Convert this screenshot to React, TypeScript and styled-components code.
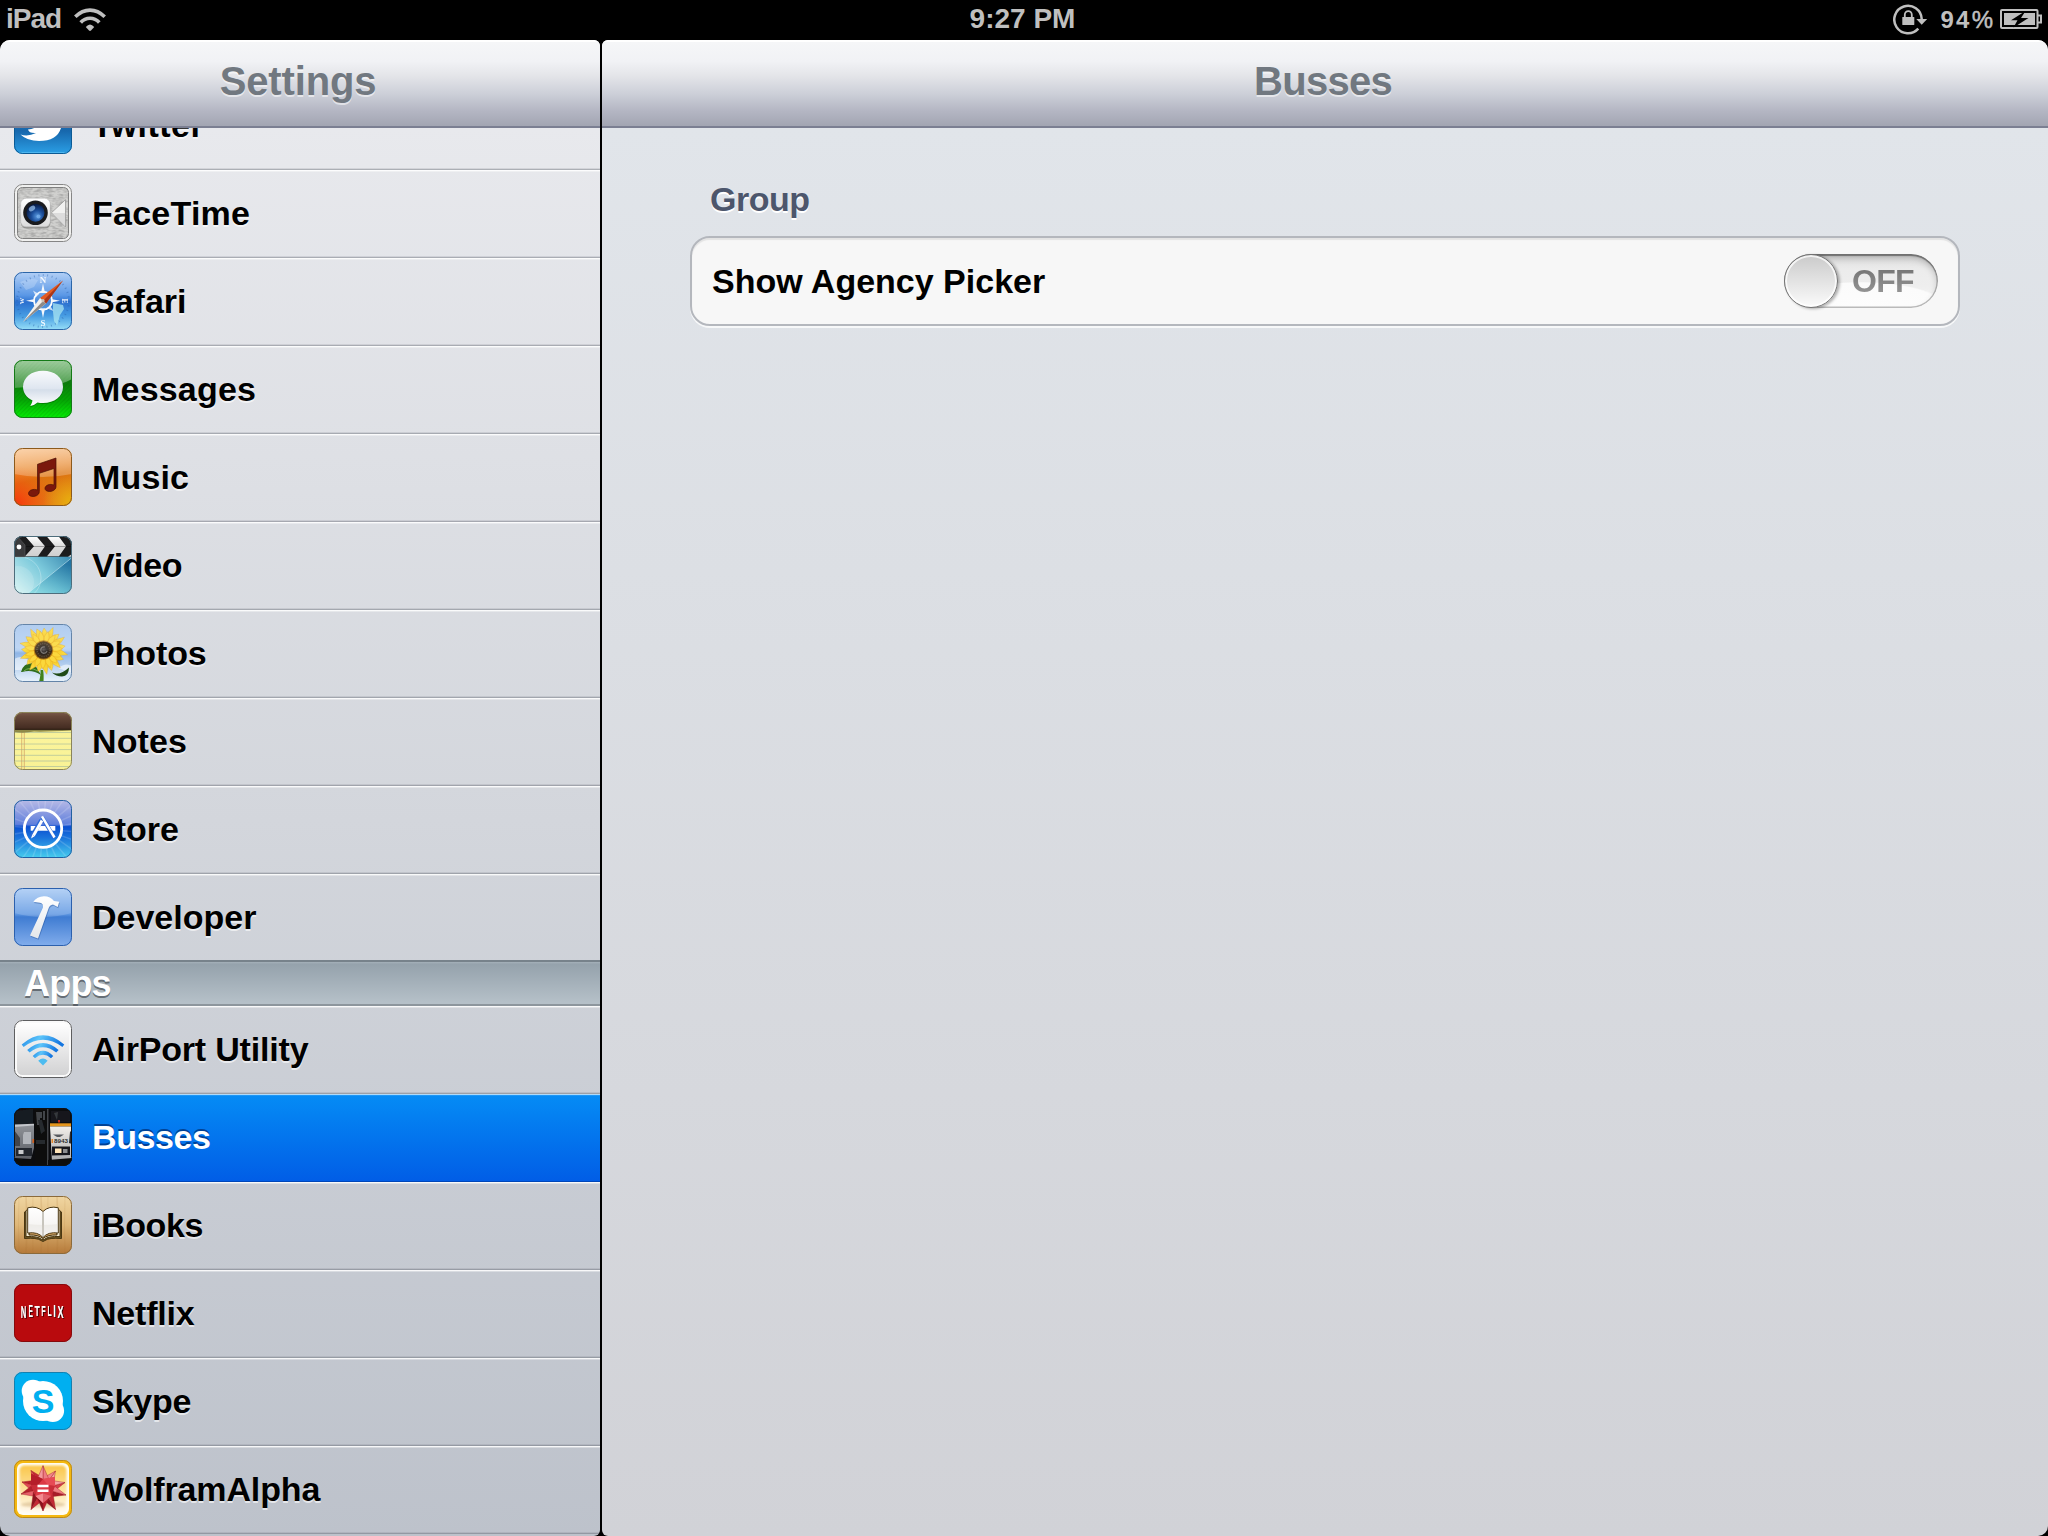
import React from "react";
import styled, { createGlobalStyle, css } from "styled-components";

const GlobalStyle = createGlobalStyle`
  * { box-sizing: border-box; }
  html, body { margin: 0; padding: 0; background: #000; }
  body { overflow: hidden; font-family: "Liberation Sans", Arial, sans-serif; font-weight: 700; }
`;

const Screen = styled.div`
  width: 2048px;
  height: 1536px;
  background: #000;
  display: flex;
  flex-direction: column;
`;

const StatusBar = styled.header`
  height: 40px;
  display: grid;
  grid-template-columns: 1fr auto 1fr;
  color: #bfbfbf;
  font-size: 28px;
  line-height: 38px;
  padding: 0 6px 0 6px;
`;

const StatusGroup = styled.div<{ $end?: boolean }>`
  display: flex;
  align-items: flex-start;
  justify-content: ${(p) => (p.$end ? "flex-end" : "flex-start")};
  svg { display: block; flex: none; }
`;

const Carrier = styled.span`
  letter-spacing: -1px;
  margin-right: 12px;
`;

const Clock = styled.span`
  padding-right: 3px;
`;

const Percent = styled.span`
  font-size: 24px;
  letter-spacing: 2.2px;
  margin: 0 7px 0 12px;
  line-height: 39px;
  i { font-style: normal; font-weight: 400; letter-spacing: 0; -webkit-text-stroke: 0.5px #bfbfbf; }
`;

const Split = styled.div`
  flex: 1;
  min-height: 0;
  display: grid;
  grid-template-columns: 600px 1446px;
  column-gap: 2px;
`;

const Pane = styled.section<{ $tone: "list" | "detail" }>`
  display: flex;
  flex-direction: column;
  min-height: 0;
  overflow: hidden;
  border-radius: ${(p) => (p.$tone === "list" ? "10px 6px 6px 10px" : "6px 10px 10px 6px")};
  background: ${(p) =>
    p.$tone === "list"
      ? "linear-gradient(#ececf0 0, #e8e9ed 88px, #d3d6dc 780px, #bdc2cb 100%)"
      : "linear-gradient(#e2e6eb 0, #e1e5ea 88px, #d1d2d7 100%)"};
`;

const TitleBar = styled.div`
  height: 88px;
  flex: none;
  border-top: 2px solid #fff;
  border-bottom: 2px solid #7b7f92;
  background: linear-gradient(#f5f6f8 0, #f1f2f5 23%, #e4e5e9 40%, #cccfd8 62%, #b4b6c3 82%, #a2a5b2 100%);
  display: flex;
  align-items: center;
  justify-content: center;
`;

const Title = styled.h1<{ $tracking?: number }>`
  margin: 0;
  padding: 0 4px 6px 0;
  font-size: 40px;
  line-height: 46px;
  color: #717880;
  letter-spacing: ${(p) => p.$tracking ?? -0.15}px;
  text-shadow: 0 2px 0 rgba(255, 255, 255, 0.55);
`;

const Viewport = styled.div`
  flex: 1;
  min-height: 0;
  overflow: hidden;
`;

const List = styled.ul`
  list-style: none;
  margin: -46px 0 0;
  padding: 0;
`;

const Row = styled.li<{ $selected?: boolean; $last?: boolean }>`
  height: ${(p) => (p.$last ? 86 : 88)}px;
  display: flex;
  align-items: flex-start;
  padding: 14px 0 0 14px;
  color: #000;
  text-shadow: 0 2px 0 rgba(255, 255, 255, 0.6);
  box-shadow: inset 0 1px 0 rgba(255, 255, 255, 0.8), inset 0 2px 0 rgba(255, 255, 255, 0.35),
    inset 0 -1px 0 ${(p) => (p.$last ? "transparent" : "rgba(90,95,105,0.32)")},
    inset 0 -2px 0 ${(p) => (p.$last ? "transparent" : "rgba(90,95,105,0.14)")};
  ${(p) =>
    p.$selected &&
    css`
      color: #fff;
      text-shadow: 0 -2px 0 rgba(0, 30, 90, 0.6);
      background: linear-gradient(#058cf5, #015de6);
      box-shadow: inset 0 1px 0 rgba(190, 225, 250, 0.9), inset 0 2px 0 rgba(90, 180, 250, 0.3),
        inset 0 -1px 0 #0046b8;
    `}
`;

const Label = styled.span<{ $tracking: number }>`
  font-size: 34px;
  line-height: 40px;
  margin: 9px 0 0 20px;
  white-space: nowrap;
  letter-spacing: ${(p) => p.$tracking}px;
`;

const SectionHeader = styled.li`
  height: 46px;
  border-top: 2px solid #77828b;
  border-bottom: 2px solid #8d969d;
  background: linear-gradient(#a5b1ba 0, #95a2ac 5%, #b5c0c8 96%);
  color: #fff;
  font-size: 36px;
  line-height: 44px;
  padding-left: 24px;
  letter-spacing: -0.8px;
  text-shadow: 0 2px 0 rgba(60, 66, 72, 0.65);
`;

const IconSvg = styled.svg`
  width: 58px;
  height: 58px;
  flex: none;
  display: block;
  text-shadow: none;
`;

const Settings = styled.main`
  display: flex;
  flex-direction: column;
  padding: 50px 88px 0 88px;
`;

const GroupTitle = styled.h2`
  margin: 0 0 16px 20px;
  font-size: 34px;
  line-height: 42px;
  color: #4c566c;
  text-shadow: 0 2px 0 #fff;
  letter-spacing: -0.5px;
`;

const Cell = styled.div`
  height: 90px;
  border: 2px solid #b4b7bd;
  border-radius: 20px;
  background: #f7f7f7;
  box-shadow: 0 2px 0 rgba(255, 255, 255, 0.75), inset 0 2px 1px rgba(0, 0, 0, 0.08);
  display: flex;
  align-items: center;
  justify-content: space-between;
  padding: 0 20px;
  font-size: 34px;
  line-height: 40px;
  color: #000;
`;

const Toggle = styled.button`
  width: 154px;
  height: 54px;
  border: 0;
  padding: 0;
  border-radius: 27px;
  background: radial-gradient(ellipse 92px 28px at 50% 100%, #fdfdfd 0, #fbfbfb 90%, rgba(252, 252, 252, 0) 94%),
    linear-gradient(#dcdcdc, #ececec 30%, #eee 60%, #f9f9f9);
  box-shadow: inset 0 0 0 1.5px rgba(110, 110, 110, 0.45), inset 0 2px 1px rgba(50, 50, 50, 0.5),
    inset 0 4px 7px rgba(0, 0, 0, 0.22);
  display: flex;
  align-items: center;
`;

const Knob = styled.span`
  width: 54px;
  height: 54px;
  border-radius: 50%;
  border: 1.5px solid #747474;
  background: linear-gradient(#cacaca, #fbfbfb);
  box-shadow: inset 0 0 0 2px rgba(255, 255, 255, 0.75), 2px 1px 3px rgba(0, 0, 0, 0.3);
`;

const ToggleText = styled.span`
  font-family: "Liberation Sans", Arial, sans-serif;
  font-weight: 700;
  font-size: 32px;
  line-height: 36px;
  margin: 0 0 1px 14px;
  letter-spacing: -0.7px;
  color: transparent;
  background: linear-gradient(#6e6e6e, #9c9c9c);
  background-clip: text;
  -webkit-background-clip: text;
`;

const Stops = ({ id, colors, x2 = 0, y2 = 1 }: { id: string; colors: [number, string][]; x2?: number; y2?: number }) => (
  <linearGradient id={id} x1="0" y1="0" x2={x2} y2={y2}>
    {colors.map(([o, c], i) => (
      <stop key={i} offset={o} stopColor={c} />
    ))}
  </linearGradient>
);

const IconFrame = ({ id, edge, children }: { id: string; edge: string; children: React.ReactNode }) => (
  <IconSvg viewBox="0 0 58 58">
    <defs>
      <clipPath id={`${id}-clip`}>
        <rect width="58" height="58" rx="8.5" />
      </clipPath>
    </defs>
    <g clipPath={`url(#${id}-clip)`}>{children}</g>
    <rect x="0.5" y="0.5" width="57" height="57" rx="8" fill="none" stroke={edge} />
  </IconSvg>
);

const TwitterIcon = () => (
  <IconFrame id="tw" edge="#0b5a94">
    <defs><Stops id="tw-g" colors={[[0, "#3d8fd0"], [0.6, "#1767ac"], [1, "#2ba0e6"]]} /></defs>
    <rect width="58" height="58" fill="url(#tw-g)" />
    <path d="M6.500 38.500Q14 41 22 37Q15 37.500 14 33.500Q19 33 22 31L20 20H48Q50 45 25 45Q13 45 6.500 38.500Z" fill="#fff" />
    <path d="M2 56.500H56" stroke="#5cc0f5" strokeWidth="1" opacity=".7" />
  </IconFrame>
);

const FaceTimeIcon = () => (
  <IconFrame id="ft" edge="#858585">
    <defs>
      <filter id="ft-n" x="0" y="0" width="100%" height="100%" colorInterpolationFilters="sRGB">
        <feTurbulence type="fractalNoise" baseFrequency=".18 .45" numOctaves="2" seed="3" />
        <feColorMatrix values="0 0 0 0 .5  0 0 0 0 .5  0 0 0 0 .5  1.6 0 0 0 -.6" />
      </filter>
      <Stops id="ft-b" colors={[[0, "#ffffff"], [1, "#dcdcdc"]]} />
      <radialGradient id="ft-l" cx=".6" cy=".7" r=".7">
        <stop offset="0" stopColor="#5a9ae0" /><stop offset=".45" stopColor="#1c4f9c" /><stop offset="1" stopColor="#06163c" />
      </radialGradient>
    </defs>
    <rect width="58" height="58" fill="#f0f0ef" />
    <rect x="3.500" y="3.500" width="51" height="51" rx="5" fill="#d0d0ce" stroke="#7f7f7f" />
    <rect x="4" y="4" width="50" height="50" filter="url(#ft-n)" opacity=".7" />
    <rect x="7" y="15" width="29.500" height="29.500" rx="5.500" fill="#7d7d7b" opacity=".7" />
    <rect x="6.700" y="14.300" width="29.500" height="28.500" rx="5.500" fill="url(#ft-b)" stroke="#bbb" strokeWidth=".5" />
    <path d="M37.500 28.700L51.500 15.700V43Z" fill="#f1f1f0" stroke="#8f8f8f" strokeWidth=".7" />
    <path d="M38 29H51V42.500Z" fill="#cfcfce" opacity=".6" />
    <circle cx="21.500" cy="28.700" r="12.300" fill="#1a1b1e" />
    <circle cx="21.500" cy="28.700" r="9" fill="url(#ft-l)" />
    <ellipse cx="18" cy="24.500" rx="3.500" ry="2.300" fill="#9cc6f2" opacity=".7" transform="rotate(-35 18 24.500)" />
    <circle cx="24.500" cy="32.500" r="2" fill="#86bdf5" opacity=".6" />
  </IconFrame>
);

const SafariIcon = () => (
  <IconFrame id="sf" edge="#2c66a8">
    <defs>
      <Stops id="sf-g" colors={[[0, "#b3d0f6"], [0.4, "#5b98e6"], [0.52, "#2b70cf"], [0.75, "#459be2"], [1, "#98e0f8"]]} />
    </defs>
    <rect width="58" height="58" fill="url(#sf-g)" />
    <path d="M39 31L49 33L50 37L46 43L43 54L40 49L39 40Z" fill="#a8e6f2" opacity=".75" />
    <path d="M6 10Q16 5 24 8L20 15L12 18Z" fill="#cfe2fa" opacity=".35" />
    <circle cx="29" cy="29" r="26" fill="none" stroke="#2459a6" strokeWidth="2" strokeDasharray="1 3.500" opacity=".4" />
    <circle cx="29" cy="28.700" r="9" fill="#7db4ea" fillOpacity=".35" stroke="#fff" strokeWidth="1.800" />
    <g fill="#f5f8fc">
      <path d="M29 11.500L31 21H27Z M29 46L31 36.500H27Z M12 28.700L21 27V30.500Z M46 28.700L37 27V30.500Z" />
      <path d="M19 18.500L25 22L22 25Z M39.500 39L36 33.500L33.500 36.500Z M19 39L22 33L25 36Z M39.500 18.500L33.500 21.500L36 24.500Z" opacity=".75" />
    </g>
    <g fill="#fff" fontFamily="Liberation Serif, serif" fontSize="9" fontWeight="700" textAnchor="middle" opacity=".9">
      <text x="29" y="10.500">N</text>
      <text x="29" y="54">S</text>
      <text transform="translate(10 29) rotate(-90)" fontSize="6.500">W</text>
      <text transform="translate(48 29) rotate(90)" fontSize="7.500">E</text>
    </g>
    <path d="M49 8.500L26 26L32 31.500Z" fill="#e35a22" />
    <path d="M49 8.500L29 29L32 31.500Z" fill="#a8371a" />
    <path d="M9 50L26 26L32 31.500Z" fill="#f4f1ec" />
    <path d="M9 50L29 29L32 31.500Z" fill="#8f8a87" />
    <circle cx="29" cy="28.700" r="1.600" fill="#c9c2ba" />
  </IconFrame>
);

const MessagesIcon = () => (
  <IconFrame id="ms" edge="#147a17">
    <defs>
      <Stops id="ms-g" colors={[[0, "#3f9b3d"], [0.4, "#0c7c0c"], [0.7, "#05a905"], [1, "#05f005"]]} />
      <Stops id="ms-b" colors={[[0, "#f8fafc"], [0.5, "#dfe6f0"], [0.54, "#d5deea"], [1, "#ffffff"]]} />
      <Stops id="ms-h" colors={[[0, "rgba(255,255,255,.5)"], [1, "rgba(255,255,255,.25)"]]} />
      <pattern id="ms-p" width="3" height="3" patternUnits="userSpaceOnUse" patternTransform="rotate(45)">
        <rect width="1.300" height="3" fill="#025f02" opacity=".16" />
      </pattern>
    </defs>
    <rect width="58" height="58" fill="url(#ms-g)" />
    <rect width="58" height="58" fill="url(#ms-p)" />
    <path d="M0 0H58V19Q46 26 29 26.500Q12 27 0 28Z" fill="url(#ms-h)" />
    <path d="M29 12C40.500 12 49 18.500 49 28C49 37.500 40.500 44 29 44Q26 44 23.500 43.300Q21 46 16.300 47Q18 44.500 18.500 41.500C12.500 38.500 9 33.700 9 28C9 18.500 17.500 12 29 12Z" fill="#045804" opacity=".5" />
    <path d="M29 10.800C40.500 10.800 49 17.500 49 27C49 36.500 40.500 43 29 43Q26 43 23.500 42.500Q21 45 16.300 46Q18 43.500 18.500 40.500C12.500 37.500 9 32.700 9 27C9 17.500 17.500 10.800 29 10.800Z" fill="url(#ms-b)" />
  </IconFrame>
);

const MusicIcon = () => (
  <IconFrame id="mu" edge="#8c5a1c">
    <defs>
      <Stops id="mu-g" x2={0.25} colors={[[0, "#f7a85a"], [0.45, "#e88425"], [0.6, "#dc7410"], [1, "#e37a16"]]} />
      <radialGradient id="mu-r" cx="0" cy="1" r=".7"><stop offset="0" stopColor="#f8300c" /><stop offset="1" stopColor="#f6500c" stopOpacity="0" /></radialGradient>
      <radialGradient id="mu-y" cx="1" cy=".95" r=".5"><stop offset="0" stopColor="#e8b30e" /><stop offset="1" stopColor="#e8b30e" stopOpacity="0" /></radialGradient>
      <Stops id="mu-h" colors={[[0, "rgba(255,255,255,.5)"], [1, "rgba(255,255,255,.22)"]]} />
    </defs>
    <rect width="58" height="58" fill="url(#mu-g)" />
    <rect width="58" height="58" fill="url(#mu-r)" />
    <rect width="58" height="58" fill="url(#mu-y)" />
    <path d="M0 0H58V26Q29 32 0 26Z" fill="url(#mu-h)" />
    <path d="M23.500 16.300L42 10V38.500C42 44.500 31 45 31 40.500C31 37 36 35.500 40 37V20.500L25.300 25.300V43.500C25.300 49.500 14.500 50 14.500 45.500C14.500 42 19.500 40.500 23.500 42Z" fill="#7b180c" stroke="#4c1206" strokeWidth=".7" />
  </IconFrame>
);

const VideoIcon = () => (
  <IconFrame id="vd" edge="#4d6d7c">
    <defs>
      <linearGradient id="vd-g" x1="0" y1="1" x2="1" y2="0">
        <stop offset="0" stopColor="#d8f5f3" /><stop offset=".45" stopColor="#7ccadc" /><stop offset="1" stopColor="#1b6b9c" />
      </linearGradient>
      <linearGradient id="vd-d" x1="0" y1="1" x2=".4" y2="0">
        <stop offset="0" stopColor="#7fe0e6" stopOpacity=".6" /><stop offset="1" stopColor="#0d5f94" stopOpacity=".6" />
      </linearGradient>
      <Stops id="vd-w" colors={[[0, "#ffffff"], [0.5, "#dcdcdc"], [1, "#cfcfcf"]]} />
    </defs>
    <rect width="58" height="58" fill="url(#vd-g)" />
    <path d="M13 58L58 21V58Z" fill="url(#vd-d)" />
    <path d="M13 58L58 21.500" stroke="#c8eef5" strokeWidth=".8" opacity=".8" />
    <circle cx="6" cy="42" r="21" fill="none" stroke="#fff" strokeWidth=".9" opacity=".3" />
    <circle cx="4" cy="46" r="16" fill="#fff" opacity=".14" />
    <rect width="58" height="20.700" fill="#1c1c1d" />
    <path d="M11.700 .700H23L31 10.300L24 20.300H11L20 10.300Z M33 .700H45L52 10.300L45 20.300H33L41 10.300Z" fill="url(#vd-w)" />
    <path d="M0 0H3L11 9V20.700H0Z" fill="#3b3b3d" stroke="#5c5c5e" strokeWidth=".6" />
    <path d="M58 18V20.700H54Z" fill="#d8d8d8" />
    <circle cx="5" cy="11" r="2.400" fill="#fff" />
    <path d="M12 10.500H58" stroke="#000" strokeWidth=".6" opacity=".5" />
  </IconFrame>
);

const around = (n: number, off: number) => Array.from({ length: n }, (_, i) => (360 / n) * i + off);

const PhotosIcon = () => (
  <IconFrame id="ph" edge="#6484a8">
    <defs>
      <Stops id="ph-g" colors={[[0, "#a9c8ef"], [0.45, "#b9d3f3"], [0.5, "#8fb5e6"], [1, "#e9f3fb"]]} />
      <Stops id="ph-p" colors={[[0, "#fbe04a"], [0.6, "#f6c51c"], [1, "#d98a0c"]]} />
      <radialGradient id="ph-c"><stop offset="0" stopColor="#55504f" /><stop offset=".4" stopColor="#292321" /><stop offset="1" stopColor="#4c3415" /></radialGradient>
    </defs>
    <rect width="58" height="58" fill="url(#ph-g)" />
    <path d="M0 35Q10 30 16 38T0 46Z M44 44Q52 38 58 42V49Z" fill="#fff" opacity=".55" />
    <path d="M26.500 46Q27 50 25 58H29.500Q30 50 29 46Z" fill="#42821c" />
    <path d="M7 48Q9 39 19 39Q22 42 27 51Q18 45 8 48Z" fill="#2f6d1b" />
    <path d="M10 47Q15 42 24 47" stroke="#79b04c" strokeWidth="1" fill="none" />
    <path d="M38 48.500Q46 52 55 43.500Q55 52 48 52.500Q42 52.500 38 48.500Z" fill="#1f4b17" />
    {around(19, 4).map((a, i) => (
      <path key={a} d={`M29.500 26L26.300 11Q27 7 ${29.5 + (i % 3) - 1} ${i % 2 ? 1.5 : 4}Q32 7 32.700 11Z`} fill="url(#ph-p)" stroke="#d8951a" strokeWidth=".3" transform={`rotate(${a} 29.500 26)`} />
    ))}
    {around(15, 14).map((a) => (
      <path key={a} d="M29.500 26L27 13Q27.800 9.500 29.500 7Q31.200 9.500 32 13Z" fill="#fbd83c" stroke="#e3a01c" strokeWidth=".3" transform={`rotate(${a} 29.500 26)`} />
    ))}
    <circle cx="29.500" cy="26" r="9.800" fill="#9c5c0c" opacity=".7" />
    <circle cx="29.500" cy="26" r="8.800" fill="url(#ph-c)" />
    <circle cx="29.500" cy="26" r="6.500" fill="none" stroke="#76675a" strokeWidth="1.600" strokeDasharray="1 1.200" opacity=".6" />
    <path d="M31 23A3.200 3.200 0 1 0 33 27" fill="none" stroke="#8a8580" strokeWidth="1.300" opacity=".8" />
    <path d="M0 0H58V24Q29 29 0 24Z" fill="#fff" opacity=".1" />
  </IconFrame>
);

const NotesIcon = () => (
  <IconFrame id="nt" edge="#8b8459">
    <defs>
      <Stops id="nt-b" colors={[[0, "#7b5a4a"], [0.25, "#674839"], [1, "#40291f"]]} />
      <Stops id="nt-y" colors={[[0, "#f2ec8d"], [0.5, "#fbf49b"], [1, "#f8f294"]]} />
    </defs>
    <rect width="58" height="58" fill="url(#nt-y)" />
    {[20.500, 26.300, 32, 37.600, 43.300, 49, 54.500].map((y) => (
      <path key={y} d={`M0 ${y}H58`} stroke="#aebf9c" strokeWidth=".9" opacity=".8" />
    ))}
    <path d="M7.700 19V58M10.300 19V58" stroke="#cf9b5e" strokeWidth=".8" opacity=".85" />
    <path d="M0 16H58V18.500Q30 20 20 19.500Q10 21.500 0 20Z" fill="#8f8a48" />
    <rect width="58" height="17.500" fill="url(#nt-b)" />
    <path d="M0 17.300H58" stroke="#2a1912" strokeWidth="1" />
  </IconFrame>
);

const StoreIcon = () => (
  <IconFrame id="st" edge="#2260a2">
    <defs>
      <Stops id="st-g" colors={[[0, "#b8bae6"], [0.42, "#5f7fdc"], [0.46, "#0a4fd0"], [0.65, "#1a74dc"], [1, "#46cdee"]]} />
    </defs>
    <rect width="58" height="58" fill="url(#st-g)" />
    <g stroke="#fff" opacity=".15" strokeWidth="1.500">
      {around(24, 5).map((a) => (
        <path key={a} d="M29 9V-16" transform={`rotate(${a} 29 29)`} />
      ))}
    </g>
    <circle cx="29" cy="28.700" r="18.700" fill="none" stroke="#fff" strokeWidth="2.800" />
    <path d="M16.700 26H41.300V30.700H16.700Z" fill="#fff" />
    <path d="M27.500 20L17.500 37" stroke="#2a68d6" strokeWidth="4.400" />
    <path d="M28 17L40.500 38" stroke="#2a68d6" strokeWidth="4" />
    <path d="M28 20.500L19.500 35.500" stroke="#fff" strokeWidth="2.900" />
    <path d="M20.600 36.200L18.200 34.800L17 38.500Z" fill="#fff" />
    <path d="M28 16.300L40.500 37.500" stroke="#fff" strokeWidth="2.500" />
  </IconFrame>
);

const DeveloperIcon = () => (
  <IconFrame id="dv" edge="#2c60ad">
    <defs>
      <Stops id="dv-g" colors={[[0, "#a8caf4"], [0.45, "#5f97e2"], [0.5, "#3f7cd2"], [1, "#82adec"]]} />
      <Stops id="dv-h" colors={[[0, "#ffffff"], [1, "#e3e6ea"]]} />
    </defs>
    <rect width="58" height="58" fill="url(#dv-g)" />
    <path d="M0 0H58V25Q29 33 0 25Z" fill="#fff" opacity=".16" />
    <path transform="translate(.6 1.200)" fill="#1d4a93" opacity=".4" d="M19.300 13.800Q23 8.500 30 8.300Q36.500 8.500 40 13L45.200 13.800L43.700 19L39 16.500Q35.500 17 34.500 20.500L24 50.500L16 47.500L29 19.500Q29.500 15.500 26 14.700Z" />
    <path fill="url(#dv-h)" d="M19.300 13.800Q23 8.500 30 8.300Q36.500 8.500 40 13L45.200 13.800L43.700 19L39 16.500Q35.500 17 34.500 20.500L24 50.500L16 47.500L29 19.500Q29.500 15.500 26 14.700Z" />
  </IconFrame>
);

const AirPortIcon = () => (
  <IconFrame id="ap" edge="#5d5e60">
    <defs>
      <Stops id="ap-g" colors={[[0, "#ffffff"], [1, "#d2d2d3"]]} />
      <Stops id="ap-a" x2={1} y2={0.2} colors={[[0, "#1c83e4"], [0.45, "#5cc5fa"], [1, "#1576e0"]]} />
    </defs>
    <rect width="58" height="58" fill="#fafafa" />
    <rect x="3" y="3" width="52" height="52" rx="5.500" fill="url(#ap-g)" />
    <g fill="url(#ap-a)">
      <path d="M7.700 24.500Q29 6 50.300 24.500L48.400 26.900Q29 12.500 9.600 26.900Z" />
      <path d="M13.200 30Q29 15.800 44.600 30L42.200 32.500Q29 22 15.600 32.500Z" />
      <path d="M18.700 36Q29 25.500 39.300 36L37 38.200Q29 31.500 21 38.200Z" />
      <path d="M24.200 40.700Q29 36.500 33.600 40.700L29 45.500Z" fill="#4dbcf0" />
    </g>
  </IconFrame>
);

const BussesIcon = () => (
  <IconFrame id="bs" edge="#101214">
    <defs>
      <Stops id="bs-l" colors={[[0, "#8e9197"], [1, "#5c5f66"]]} />
      <Stops id="bs-r" colors={[[0, "#f2efea"], [1, "#a9a9ab"]]} />
      <filter id="bs-s"><feGaussianBlur stdDeviation=".35" /></filter>
    </defs>
    <rect width="58" height="58" fill="#0b0c0f" />
    <g filter="url(#bs-s)">
      <path d="M0 3L19 1V16L0 17Z" fill="#191b20" />
      <path d="M0 18L20 17V40L17 51L0 50Z" fill="url(#bs-l)" />
      <path d="M0 16.500L20 15.800V17.500L0 19Z" fill="#c3c6cb" />
      <path d="M0 22L6 30V38H0Z" fill="#42454c" />
      <path d="M10 24H17V36H9V27Z" fill="#b1b4ba" />
      <path d="M2 40H18V48H2Z" fill="#24272d" />
      <rect x="4.500" y="42" width="5" height="4" fill="#c8cacd" />
      <rect x="18.500" y="31" width="1.600" height="4" fill="#d35f1e" />
      <path d="M21 0H33V58H21Z" fill="#08090b" />
      <path d="M22 4H28V10H26V17H23Z M29 3H31V12H29Z" fill="#6b6e72" opacity=".6" />
      <path d="M24 12H28L31 23L27 26Z M22 32H31V36H22Z" fill="#26292d" />
      <path d="M33 0H34.500V58H33Z" fill="#424448" />
      <path d="M37 3H56V14H37Z" fill="#17181b" />
      <path d="M40 5L44 4L43 12Z" fill="#36393d" />
      <rect x="44" y="12" width="2" height="2.500" fill="#c12a1a" />
      <path d="M36 15.300H58V18.500H36Z" fill="#e4951f" />
      <path d="M36 18.500H58V52L38 54Z" fill="url(#bs-r)" />
      <path d="M39 26.500H50L46 29H43Z" fill="#56595d" />
      <path d="M56 24L58 22V36L55 35Z" fill="#292a2d" />
      <rect x="37.500" y="31" width="1.500" height="4" fill="#e8872a" />
      <path d="M38 38.500H56V47L38 47.500Z" fill="#17181a" />
      <rect x="41" y="40.500" width="6.500" height="4.500" fill="#ffe4b8" />
      <rect x="49" y="41" width="4.500" height="4" fill="#8c8d90" />
      <path d="M34 52L58 50V58H34Z M0 51L18 52V58H0Z" fill="#0d0e11" />
    </g>
    <text x="40" y="35.300" fontSize="6" fontWeight="700" fontFamily="Liberation Sans, sans-serif" fill="#2d2d2d" textLength="14" lengthAdjust="spacingAndGlyphs">8943</text>
  </IconFrame>
);

const IBooksIcon = () => (
  <IconFrame id="ib" edge="#8b6a3b">
    <defs>
      <Stops id="ib-g" colors={[[0, "#f0d6a2"], [0.5, "#dfb778"], [1, "#b47838"]]} />
      <Stops id="ib-p" colors={[[0, "#ffffff"], [0.6, "#f6f5f3"], [1, "#ffffff"]]} />
    </defs>
    <rect width="58" height="58" fill="url(#ib-g)" />
    {[5, 12, 19, 27, 34, 43, 51].map((x, i) => (
      <path key={x} d={`M${x} 0Q${x + (i % 2 ? 1.5 : -1)} 30 ${x} 58`} stroke="#a86f30" strokeWidth={i % 2 ? 1.6 : 0.7} opacity=".16" fill="none" />
    ))}
    <g stroke="#4b3712" strokeWidth="1" strokeLinejoin="round">
      <path d="M10.500 16L15 14V40Q24 39.500 29 43Q34 39.500 43 40V14L47.500 16V42.500Q35 41.500 31 44.500L29 45.500L27 44.500Q23 41.500 10.500 42.500Z" fill="#6a5422" />
      <path d="M12 14.500L15 13V39Q24 38.500 29 42.500Q34 38.500 43 39V13L46 14.500V40.500Q34 40 30.500 43.300H27.500Q24 40 12 40.500Z" fill="#f5ecd2" />
      <path d="M13.700 11.800Q23 9.500 29 15.500Q35 9.500 44.300 11.800V37Q34 35.500 29 41.500Q24 35.500 13.700 37Z" fill="url(#ib-p)" />
    </g>
    <path d="M29 16V41" stroke="#8d8878" strokeWidth=".9" />
    <path d="M14.500 28Q22 29 28.500 29V39.500Q24 35 14.500 36.300Z M43.500 28Q36 29 29.500 29V39.500Q34 35 43.500 36.300Z" fill="#d9d7d2" opacity=".3" />
  </IconFrame>
);

const netflixLetters: [string, number, number, number][] = [
  ["N", 6.8, 17, 5.5], ["E", 14.6, 15.8, 4.4], ["T", 20.4, 15, 5.2], ["F", 27.2, 14.6, 4.3],
  ["L", 33.4, 15, 4.1], ["I", 39.2, 15.8, 2.4], ["X", 43.6, 17, 6],
];

const NetflixIcon = () => (
  <IconFrame id="nf" edge="#850a0c">
    <defs>
      <filter id="nf-s"><feDropShadow dx="1" dy=".7" stdDeviation=".2" floodColor="#300303" /></filter>
    </defs>
    <rect width="58" height="58" fill="#b90a0d" />
    <g fontFamily="Liberation Sans, sans-serif" fontWeight="700" fill="#fff" filter="url(#nf-s)">
      {netflixLetters.map(([c, x, size, w], i) => (
        <text key={i} x={x} y={21.5 + size * 0.72} fontSize={size} textLength={w} lengthAdjust="spacingAndGlyphs">{c}</text>
      ))}
    </g>
  </IconFrame>
);

const SkypeIcon = () => (
  <IconFrame id="sk" edge="#157fae">
    <rect width="58" height="58" fill="#00aff0" />
    <circle cx="29" cy="29" r="20" fill="#fff" />
    <circle cx="19" cy="19" r="11.300" fill="#fff" />
    <circle cx="38.800" cy="38.800" r="11.300" fill="#fff" />
    <text x="29" y="40.700" fontSize="34" fontWeight="700" fontFamily="Liberation Sans, sans-serif" fill="#00aff0" textAnchor="middle">S</text>
  </IconFrame>
);

/* Spike tips of the polyhedron, clockwise from the top, with light and dark facet fills. */
const wolframSpikes: [number, number, string, string][] = [
  [17, 10.5, "#e85a62", "#c22a35"],
  [41.5, 11, "#f2858a", "#f5a0a2"],
  [8, 22, "#e04a54", "#b8202c"],
  [51, 22.500, "#f6a3a5", "#d83d48"],
  [7, 34, "#e8616a", "#b3222d"],
  [52, 35, "#ee7a80", "#a81c28"],
  [17, 49.500, "#c62a36", "#8e1620"],
  [41.500, 49.500, "#c22a35", "#8e1620"],
  [29, 51, "#b81f2b", "#8a121c"],
  [29, 5.700, "#f4989b", "#ee7c82"],
];

const WolframIcon = () => (
  <IconFrame id="wa" edge="#b98a1c">
    <defs>
      <Stops id="wa-g" colors={[[0, "#fbc74a"], [0.5, "#fde09a"], [1, "#fffaf0"]]} />
      <filter id="wa-b"><feGaussianBlur stdDeviation="1.300" /></filter>
    </defs>
    <rect width="58" height="58" fill="#f5b80f" />
    <rect x="3" y="3" width="52" height="52" rx="6" fill="#fffdf4" />
    <rect x="5.500" y="5.500" width="47" height="47" rx="5" fill="url(#wa-g)" filter="url(#wa-b)" />
    <ellipse cx="29" cy="44.500" rx="22" ry="3" fill="#b98f52" opacity=".35" filter="url(#wa-b)" />
    {wolframSpikes.map(([x, y, light, dark], i) => {
      const dx = x - 29, dy = y - 28.5, d = Math.hypot(dx, dy);
      const bx = 29 + (dx / d) * 8, by = 28.5 + (dy / d) * 8;
      const px = (-dy / d) * 6.5, py = (dx / d) * 6.5;
      return (
        <g key={i} stroke="#9c1823" strokeWidth=".4" strokeLinejoin="round">
          <path d={`M${x} ${y}L${bx + px} ${by + py}L29 28.500Z`} fill={dark} />
          <path d={`M${x} ${y}L${bx - px} ${by - py}L29 28.500Z`} fill={light} />
        </g>
      );
    })}
    <path d="M29 43L21.500 36L17 25L17 13.500L29 19L41 17L41 26L37 36Z" fill="#dc3a45" />
    <path d="M17 13.500L29 19L24 25L17 25Z" fill="#b51e2a" />
    <path d="M41 17L29 19L34 25L41 26Z" fill="#e64b55" />
    <path d="M17 25L24 25L21.500 36Z M41 26L34 25L37 36Z" fill="#c82d38" />
    <path d="M21.500 36L29 33.500V43Z" fill="#f28a8f" />
    <path d="M37 36L29 33.500V43Z" fill="#e0606a" />
    <path d="M23.500 24.700H34.500V27.300H23.500Z M23.500 29.500H34.500V32.100H23.500Z" fill="#fff" />
  </IconFrame>
);

const WifiGlyph = () => (
  <svg width="34" height="40" viewBox="0 0 34 40" fill="none" stroke="#bfbfbf" strokeWidth="3.600">
    <path d="M2.300 16.800Q9 10.100 17 10.100T31.700 16.800" />
    <path d="M7.700 22.500Q11.500 18.300 17 18.300T26.300 22.500" />
    <path d="M12.800 27Q17 22 21.200 27L18 30.600Q17 31.400 16 30.600Z" fill="#bfbfbf" stroke="none" />
  </svg>
);

const RotationLockGlyph = () => (
  <svg width="36" height="40" viewBox="0 0 36 40">
    <path d="M25.300 28.600A13.700 13.700 0 1 1 28.700 19" fill="none" stroke="#bfbfbf" strokeWidth="2.500" />
    <path d="M23.300 19H34.200L28.700 24.700Z" fill="#bfbfbf" />
    <rect x="9.300" y="17" width="12" height="8" rx=".6" fill="#bfbfbf" />
    <path d="M11.800 17V14.700A3.500 3.500 0 0 1 18.800 14.700V17" fill="none" stroke="#bfbfbf" strokeWidth="1.800" />
  </svg>
);

const BatteryGlyph = () => (
  <svg width="42" height="40" viewBox="0 0 42 40">
    <rect x="1" y="10" width="36.500" height="18" rx="1" fill="none" stroke="#bfbfbf" strokeWidth="2" />
    <path d="M38 15.500H41V22.500H38" fill="none" stroke="#bfbfbf" strokeWidth="2" />
    <rect x="4" y="13" width="31" height="12" fill="#bfbfbf" />
    <path d="M25.500 11L11 20.200H17.500L13.500 27.500L28.500 18H21Z" fill="#000" />
  </svg>
);

type Entry = { name: string; icon: React.ComponentType; tracking?: number; selected?: boolean };

const systemEntries: Entry[] = [
  { name: "Twitter", icon: TwitterIcon, tracking: 0.45 },
  { name: "FaceTime", icon: FaceTimeIcon, tracking: 0.25 },
  { name: "Safari", icon: SafariIcon },
  { name: "Messages", icon: MessagesIcon, tracking: 0.2 },
  { name: "Music", icon: MusicIcon, tracking: 0.15 },
  { name: "Video", icon: VideoIcon, tracking: -0.35 },
  { name: "Photos", icon: PhotosIcon, tracking: -0.1 },
  { name: "Notes", icon: NotesIcon, tracking: 0.1 },
  { name: "Store", icon: StoreIcon },
  { name: "Developer", icon: DeveloperIcon },
];

const appEntries: Entry[] = [
  { name: "AirPort Utility", icon: AirPortIcon, tracking: -0.18 },
  { name: "Busses", icon: BussesIcon, tracking: -0.4, selected: true },
  { name: "iBooks", icon: IBooksIcon, tracking: -0.4 },
  { name: "Netflix", icon: NetflixIcon, tracking: -0.2 },
  { name: "Skype", icon: SkypeIcon, tracking: -0.2 },
  { name: "WolframAlpha", icon: WolframIcon, tracking: -0.14 },
];

const EntryRow = ({ entry, last }: { entry: Entry; last?: boolean }) => {
  const Icon = entry.icon;
  return (
    <Row $selected={entry.selected} $last={last}>
      <Icon />
      <Label $tracking={entry.tracking ?? 0}>{entry.name}</Label>
    </Row>
  );
};

export default function App() {
  return (
    <Screen>
      <GlobalStyle />
      <StatusBar>
        <StatusGroup>
          <Carrier>iPad</Carrier>
          <WifiGlyph />
        </StatusGroup>
        <Clock>9:27 PM</Clock>
        <StatusGroup $end>
          <RotationLockGlyph />
          <Percent>94<i>%</i></Percent>
          <BatteryGlyph />
        </StatusGroup>
      </StatusBar>
      <Split>
        <Pane $tone="list">
          <TitleBar><Title>Settings</Title></TitleBar>
          <Viewport>
            <List>
              {systemEntries.map((e, i) => (
                <EntryRow key={e.name} entry={e} last={i === systemEntries.length - 1} />
              ))}
              <SectionHeader>Apps</SectionHeader>
              {appEntries.map((e) => (
                <EntryRow key={e.name} entry={e} />
              ))}
            </List>
          </Viewport>
        </Pane>
        <Pane $tone="detail">
          <TitleBar><Title $tracking={-0.75}>Busses</Title></TitleBar>
          <Settings>
            <GroupTitle>Group</GroupTitle>
            <Cell>
              Show Agency Picker
              <Toggle type="button" role="switch" aria-checked={false}>
                <Knob />
                <ToggleText>OFF</ToggleText>
              </Toggle>
            </Cell>
          </Settings>
        </Pane>
      </Split>
    </Screen>
  );
}
